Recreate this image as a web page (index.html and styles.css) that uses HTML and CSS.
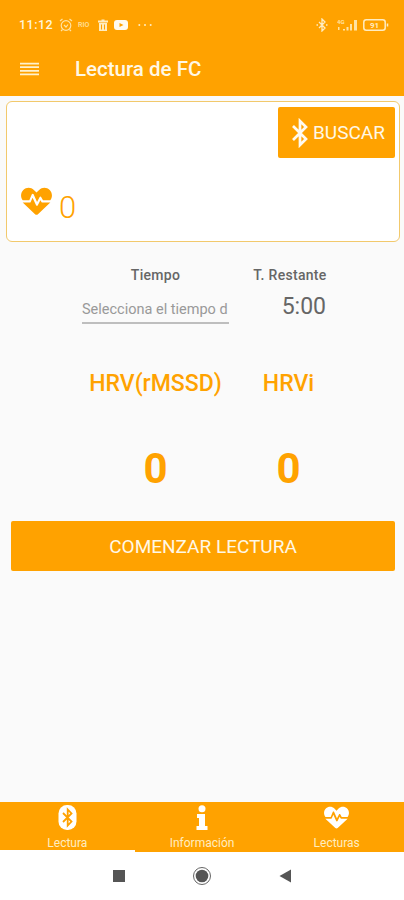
FILE: index.html
```html
<!DOCTYPE html>
<html lang="es">
<head>
<meta charset="utf-8">
<title>Lectura de FC</title>
<link rel="stylesheet" href="styles.css">
</head>
<body>
<svg class="defs" aria-hidden="true">
  <symbol id="pulse" viewBox="0 0 512 448">
    <path d="M320 211l-42 84c-6 12-23 12-29-1l-58-125-31 72c-2 6-8 9-14 9H28l204 191c13 13 35 13 48 0l204-191H352c-6 0-12-4-14-9zM474 41C426-8 347-8 299 41l-43 44-43-44C165-8 86-8 38 41c-46 47-49 121-9 172h108l42-100c5-13 23-13 29 0l57 127 41-80c6-12 23-12 29 0l28 53h120c40-51 37-125-9-172z"/>
  </symbol>
  <symbol id="rune" viewBox="0 0 18 30"><path d="M2 8 15 21 9 27V3l6 6L2 22"/></symbol>
</svg>
<div class="app">
  <header>
    <div class="status">
      <span class="clock">11:12</span>
      <svg class="alarm" viewBox="0 0 14 14"><circle cx="7" cy="7.5" r="4.8"/><path d="M1 3 3.5 1M13 3l-2.500-2M5 7l2 2 2-2.500M3.500 11.500 2 13M10.500 11.500 12 13"/></svg>
      <span class="rio">RIO</span>
      <svg class="trash" viewBox="0 0 10 12"><path d="M3.500 1.500V.5h3v1H10v2H0v-2zM1 4h8v8H1z"/><path class="slot" d="M3.500 5.500v5M6.500 5.500v5"/></svg>
      <svg class="video" viewBox="0 0 14 10"><rect width="14" height="10" rx="3"/><path class="play" d="M5.500 3v4l4-2z"/></svg>
      <svg class="dots" viewBox="0 0 14 4"><circle cx="1.300" cy="2" r="1"/><circle cx="7" cy="2" r="1"/><circle cx="12.700" cy="2" r="1"/></svg>
      <svg class="bt" viewBox="0 0 12 14"><path d="M3 4l6 6-3 3V1l3 3-6 6M.5 7h1.500M10 7h1.500"/></svg>
      <svg class="signal" viewBox="0 0 21 12"><path d="M6 11.500V10h2v1.500zM9.500 11.500V8h2v3.500zM13 11.500V5h2v6.500zM17 11.500V1h3v10.500zM1 8h1.500v3H1z"/><text x="0" y="5">4G</text></svg>
      <svg class="battery" viewBox="0 0 26 12"><rect x=".8" y=".8" width="21.400" height="10.400" rx="2.500"/><path d="M24.500 4.500v3"/><text x="11.500" y="9">91</text></svg>
    </div>
    <div class="toolbar">
      <svg class="menu" viewBox="0 0 20 14"><path d="M0 1.300h20M0 5.100h20M0 8.900h20M0 12.700h20"/></svg>
      <h1>Lectura de FC</h1>
    </div>
  </header>
  <main>
    <section class="card">
      <button class="search"><svg class="rune" viewBox="0 0 18 30"><use href="#rune"/></svg><span>BUSCAR</span></button>
      <div class="rate"><svg class="heart"><use href="#pulse"/></svg><span>0</span></div>
    </section>
    <section class="times">
      <div class="col">
        <b>Tiempo</b>
        <div class="picker"><span>Selecciona el tiempo d</span></div>
      </div>
      <div class="col rest">
        <b>T. Restante</b>
        <span class="left">5:00</span>
      </div>
    </section>
    <section class="results">
      <div class="metric"><h2>HRV(rMSSD)</h2><strong>0</strong></div>
      <div class="metric second"><h2>HRVi</h2><strong>0</strong></div>
    </section>
    <button class="start"><span>COMENZAR LECTURA</span></button>
  </main>
  <nav class="tabs">
    <div class="tab active"><svg class="oval" viewBox="0 0 18 25"><rect width="18" height="25" rx="8.500"/><path d="M4.500 8 13 16.500 9.200 20.500v-16L13 8.500 4.500 17"/></svg><span>Lectura</span></div>
    <div class="tab"><svg class="info" viewBox="0 0 12 25"><circle cx="6" cy="3.800" r="3.500"/><path d="M1 9h8v12h2.500v4H.5v-4H3v-8H1z"/></svg><span>Información</span></div>
    <div class="tab"><svg class="heart small"><use href="#pulse"/></svg><span>Lecturas</span></div>
  </nav>
  <footer>
    <svg viewBox="0 0 20 20"><rect x="4" y="4" width="12" height="12"/></svg>
    <svg viewBox="0 0 20 20"><circle cx="10" cy="10" r="6.300"/><circle class="ring" cx="10" cy="10" r="8.500"/></svg>
    <svg viewBox="0 0 20 20"><path d="M4.500 10 16 3.500v13z"/></svg>
  </footer>
</div>
</body>
</html>
```
FILE: styles.css
```css
* { box-sizing: border-box; }
body { margin: 0; font-family: Roboto, sans-serif; background: #fafafa; }
h1, h2 { margin: 0; font-weight: 500; }
button { border: 0; padding: 0; font: inherit; color: #fff8e6; background: #ffa200; border-radius: 2px; }
svg { flex: none; display: block; }
.defs { position: absolute; width: 0; height: 0; }
.app { width: 404px; height: 900px; display: flex; flex-direction: column; overflow: hidden; }

header { height: 96px; background: #ffa200; color: #fff5dc; }
.status { height: 42px; padding: 7px 15px 0 19px; display: flex; align-items: center; fill: #ffecc0; }
.clock { width: 40px; font-size: 12.5px; font-weight: 500; letter-spacing: .5px; }
.alarm { width: 14px; height: 14px; fill: none; stroke: #ffe3a3; stroke-width: 1.2; }
.rio { margin-left: 5px; width: 19px; font-size: 7px; font-weight: 500; color: #ffe3a3; }
.trash { width: 10px; height: 12px; margin-left: 1px; }
.slot { stroke: #ffa200; fill: none; }
.video { width: 14px; height: 10px; margin-left: 6px; fill: #fffaf0; }
.play { fill: #ffa200; }
.dots { width: 14px; height: 4px; margin-left: 10px; }
.bt { width: 12px; height: 14px; margin-left: auto; fill: none; stroke: #ffecc0; stroke-width: 1.3; }
.signal { width: 21px; height: 12px; margin-left: 9px; fill: #ffe3a3; }
.signal text { font-size: 6px; font-weight: 700; }
.battery { width: 26px; height: 12px; margin-left: 5px; }
.battery rect, .battery path { fill: none; stroke: #ffecc0; stroke-width: 1.5; }
.battery text { font-size: 8px; font-weight: 700; text-anchor: middle; }
.toolbar { height: 54px; display: flex; align-items: center; padding-left: 20px; }
.menu { width: 19px; height: 14px; stroke: #fff1cc; stroke-width: 1.8; }
h1 { margin-left: 36px; font-size: 20.5px; color: #fff8e6; }

main { flex: 1; padding-top: 5px; }
.card { margin: 0 4px 0 6px; height: 141px; border: 1.5px solid #f2c96c; border-radius: 6px; background: #fff; padding: 5px 4px 0 14px; display: flex; flex-direction: column; }
.search { width: 117px; height: 51px; align-self: flex-end; display: flex; align-items: center; padding-left: 13px; font-size: 19px; }
.rune { width: 18px; height: 30px; fill: none; stroke: #fffaf0; stroke-width: 2.7; }
.search span { margin-left: 4px; }
.rate { display: flex; margin-top: 29px; color: #ffa200; font-size: 31px; line-height: 38px; }
.heart { width: 31px; height: 28px; fill: #ffa200; }
.rate span { margin: 2px 0 0 7px; font-weight: 300; }

.times { display: flex; padding: 24px 0 0 82px; color: #666; }
.col { width: 147px; display: flex; flex-direction: column; align-items: center; }
.col b { font-size: 14px; line-height: 18px; font-weight: 500; letter-spacing: .3px; }
.picker { width: 147px; height: 34px; margin-top: 6px; padding-top: 11px; border-bottom: 2.5px solid #bebebe; overflow: hidden; white-space: nowrap; font-size: 14.5px; line-height: 18px; color: #999; }
.rest { width: 74px; margin-left: 24px; }
.left { align-self: flex-end; margin: 9px 1px 0 0; font-size: 23px; line-height: 28px; }
.results { display: flex; padding: 46px 0 0 89px; color: #ffa200; }
.metric { width: 133px; display: flex; flex-direction: column; align-items: center; }
.metric h2 { font-size: 23px; line-height: 28px; }
.metric strong { margin-top: 47px; font-size: 42px; line-height: 48px; }
.second { width: 51px; margin-left: 41px; }
.start { display: flex; align-items: center; justify-content: center; width: 384px; height: 50px; margin: 28px 0 0 11px; font-size: 19px; }

.tabs { height: 50px; display: flex; background: #ffa200; fill: #fff; }
.tab { flex: 1; display: flex; flex-direction: column; align-items: center; justify-content: space-between; padding: 3px 0 2px; font-size: 12px; line-height: 14px; color: #ffedc0; }
.active { border-bottom: 2.5px solid #fff; padding-bottom: 0; }
.oval { width: 19px; height: 25px; }
.oval path { fill: none; stroke: #ffa200; stroke-width: 1.8; }
.info { width: 12px; height: 25px; }
.small { width: 25px; height: 23px; margin-top: 1px; fill: #fff; }
footer { height: 48px; background: #fff; display: flex; justify-content: center; align-items: center; gap: 63px; fill: #555; }
footer svg { width: 20px; height: 20px; }
.ring { fill: none; stroke: #666; stroke-width: 1; }
```
